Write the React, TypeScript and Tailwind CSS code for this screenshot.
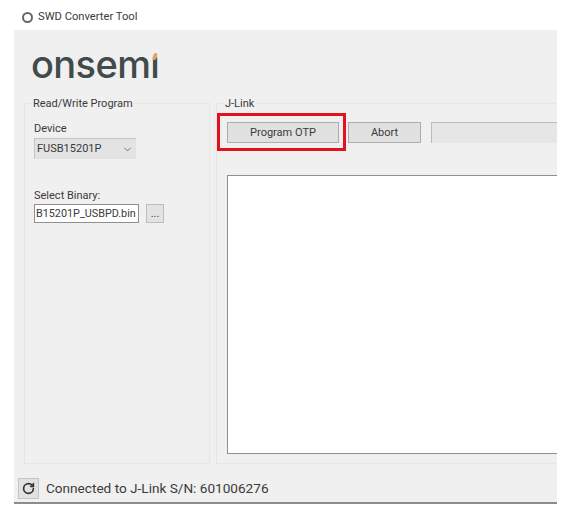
import { ChevronDown, RotateCw } from 'lucide-react';

const App = () => {
  return (
    <div className="w-[582px] h-[517px] bg-white overflow-hidden text-[#3a3a3a] font-['Roboto',sans-serif]">
      <div className="h-[30px] flex items-center pl-[22px] pt-[4px] gap-[5px] text-[11.2px]">
        <div className="w-[11px] h-[11px] rounded-full border-2 border-[#666]" />
        <span>SWD Converter Tool</span>
      </div>

      <div className="ml-[14px] w-[543px] h-[474px] bg-[#f0f0f0] border-b-2 border-[#8c8c8c] flex flex-col">
        <div className="h-[73px] pl-[17px] pt-[9px] shrink-0">
          <div className="flex items-baseline text-[#414b4b] text-[38px] leading-[50px] font-medium tracking-[-0.6px] font-['Inter',sans-serif]">
            <span>onsem</span>
            <span className="relative">
              ı
              <span className="absolute left-[3px] top-[14px] w-[4px] h-[7px] rounded-sm bg-[#e8a05a] -skew-x-12" />
            </span>
          </div>
        </div>

        <div className="flex gap-[6px] pl-[10px] h-[361px] shrink-0 text-[11px]">
          <div className="relative w-[186px] border border-[#e6e6e6] pl-[9px] pt-[17px]">
            <span className="absolute left-[6px] -top-[8px] bg-[#f0f0f0] px-[2px] leading-[15px]">Read/Write Program</span>
            <div className="leading-[15px]">Device</div>
            <div className="mt-[2px] w-[102px] h-[21px] bg-[#e3e3e3] border-l border-t border-[#c4c4c4] flex items-center justify-between pl-[2px] pr-[3px]">
              <span>FUSB15201P</span>
              <ChevronDown size={11} strokeWidth={1.75} className="text-[#555]" />
            </div>
            <div className="mt-[29px] leading-[15px]">Select Binary:</div>
            <div className="mt-[1px] flex items-center gap-[7px]">
              <div className="w-[105px] h-[19px] bg-white border border-[#8f8f8f] pl-[1px] text-[10.8px] leading-[17px] whitespace-nowrap">
                B15201P_USBPD.bin
              </div>
              <div className="w-[18px] h-[19px] bg-[#e3e3e3] border border-[#bdbdbd] flex items-center justify-center leading-none">
                ...
              </div>
            </div>
          </div>

          <div className="relative flex-1 min-w-0 border-l border-t border-b border-[#e6e6e6] pl-[10px] pt-[17px] pb-[9px] flex flex-col">
            <span className="absolute left-[6px] -top-[8px] bg-[#f0f0f0] px-[2px] leading-[15px]">J-Link</span>
            <div className="flex items-center h-[22px] shrink-0">
              <div className="relative w-[112px] h-[21px] bg-[#e1e1e1] border border-[#adadad] flex items-center justify-center pt-[2px]">
                Program OTP
                <div className="absolute -left-[11px] -top-[10px] w-[129px] h-[38px] border-[3px] border-[#e0131f]" />
              </div>
              <div className="ml-[9px] w-[73px] h-[21px] bg-[#e1e1e1] border border-[#adadad] flex items-center justify-center pt-[2px]">Abort</div>
              <div className="ml-[10px] flex-1 h-[21px] bg-[#e6e6e6] border-l border-t border-[#bcbcbc]" />
            </div>
            <div className="mt-[32px] flex-1 bg-white border-l border-t border-b border-[#8f8f8f]" />
          </div>
        </div>

        <div className="flex-1 flex items-center pl-[4px] gap-[7px] pt-[11px]">
          <div className="w-[21px] h-[21px] bg-[#e1e1e1] border border-[#c4c4c4] flex items-center justify-center">
            <RotateCw size={13} strokeWidth={3} className="text-[#333]" />
          </div>
          <span className="text-[13.6px]">Connected to J-Link S/N: 601006276</span>
        </div>
      </div>
    </div>
  );
};

export default App;
